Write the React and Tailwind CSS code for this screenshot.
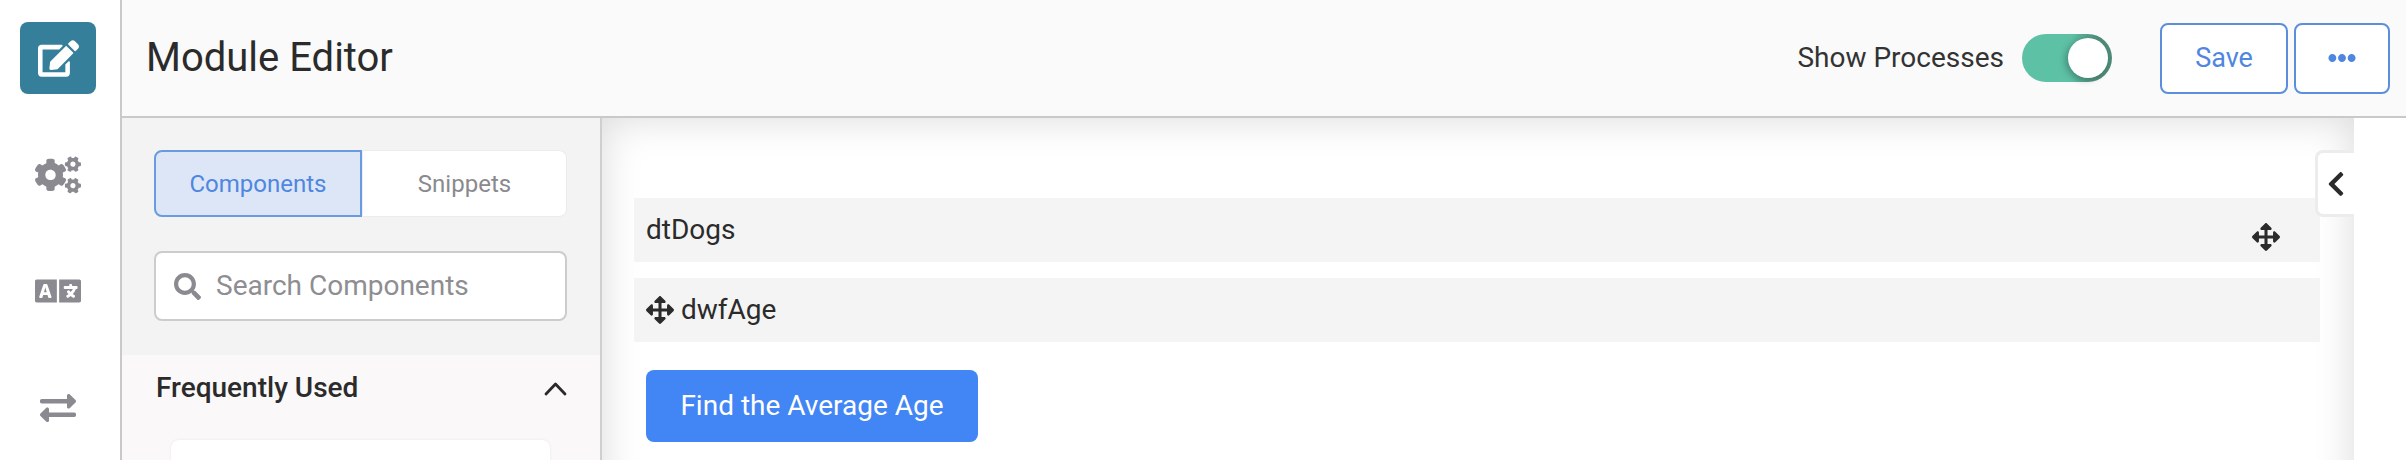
import React from 'react';
import { FaEdit, FaCogs, FaLanguage, FaExchangeAlt, FaSearch, FaEllipsisH, FaChevronLeft, FaArrowsAlt } from 'react-icons/fa';

const railItems = [
  { icon: FaEdit, size: 41, active: true },
  { icon: FaCogs, size: 46 },
  { icon: FaLanguage, size: 46 },
  { icon: FaExchangeAlt, size: 36 },
];

const App = () => {
  return (
    <div className="flex h-[460px] w-full overflow-hidden bg-white font-['Roboto',sans-serif] text-[#2b2b2b]">
      {/* left rail */}
      <div className="flex w-[122px] shrink-0 flex-col border-r-2 border-[#c9c9c9] bg-white pr-[4px]">
        {railItems.map(({ icon: Icon, size, active }, i) => (
          <div key={i} className="flex h-[116.5px] shrink-0 items-center justify-center">
            {active ? (
              <div className="flex h-[72px] w-[76px] items-center justify-center rounded-lg bg-[#367f9b] text-white">
                <Icon size={size} />
              </div>
            ) : (
              <Icon size={size} className="text-[#8a8a90]" />
            )}
          </div>
        ))}
      </div>

      <div className="flex min-w-0 flex-1 flex-col">
        {/* header */}
        <div className="relative z-10 flex h-[118px] shrink-0 items-center justify-between border-b-2 border-[#c9c9c9] bg-[#fafafa] pl-[24px] pr-[16px]">
          <h1 className="text-[40px] font-normal leading-none text-[#2b2b2b]">Module Editor</h1>
          <div className="flex items-center">
            <span className="text-[28px] text-[#333]">Show Processes</span>
            <div className="ml-[18px] flex h-[48px] w-[90px] items-center justify-end rounded-full bg-linear-to-r from-[#5dc1a6] from-[55%] to-[#4e8b78] to-[85%] pr-[4px]">
              <div className="h-[40px] w-[40px] rounded-full bg-white shadow-[-3px_2px_6px_rgba(0,0,0,0.25)]" />
            </div>
            <button className="ml-[48px] h-[71px] w-[128px] rounded-lg border-2 border-[#5b8fdc] bg-white text-[27px] text-[#4f86e0]">Save</button>
            <button className="ml-[6px] flex h-[71px] w-[96px] items-center justify-center rounded-lg border-2 border-[#5b8fdc] bg-white text-[#4f86e0]">
              <FaEllipsisH size={28} />
            </button>
          </div>
        </div>

        <div className="flex min-h-0 flex-1">
          {/* components sidebar */}
          <div className="flex w-[478px] shrink-0 flex-col bg-[#f3f3f3]">
            <div className="h-[237px] shrink-0 pl-[32px] pr-[33px] pt-[32px]">
              <div className="flex h-[67px] text-[24px]">
                <button className="w-[208px] rounded-l-lg border-2 border-[#6a9ae0] bg-[#dce6f7] text-[#4f86e0]">Components</button>
                <button className="flex-1 rounded-r-lg border border-[#ececec] bg-white text-[#8a8a8e]">Snippets</button>
              </div>
              <div className="mt-[34px] flex h-[70px] items-center rounded-lg border-2 border-[#cccccc] bg-white pl-[18px]">
                <FaSearch size={27} className="text-[#8a8a90]" />
                <span className="ml-[15px] text-[28px] text-[#8e8e92]">Search Components</span>
              </div>
            </div>
            <div className="flex-1 bg-[#faf8f8] pl-[34px] pr-[33px]">
              <div className="flex h-[66px] items-center justify-between">
                <span className="text-[28px] font-medium text-[#2b2b2b]">Frequently Used</span>
                <svg width="23" height="15" viewBox="0 0 23 15" fill="none" stroke="#2b2b2b" strokeWidth="2.8" strokeLinecap="round" strokeLinejoin="round">
                  <polyline points="2,13 11.5,3 21,13" />
                </svg>
              </div>
              <div className="ml-[15px] mt-[19px] h-[40px] w-[379px] rounded-t-lg bg-white shadow-[0_0_3px_rgba(0,0,0,0.08)]" />
            </div>
          </div>

          {/* canvas */}
          <div className="relative h-[500px] w-[1754px] shrink-0 border-l-2 border-[#cfcfcf] bg-white pl-[32px] pr-[34px] pt-[80px] shadow-[inset_0_0_40px_rgba(0,0,0,0.15)]">
            <div className="flex h-[64px] items-center justify-between bg-[#f4f4f4] pl-[12px] pr-[40px] text-[28px]">
              <span>dtDogs</span>
              <FaArrowsAlt size={28} className="mt-[14px] text-[#2b2b2b]" />
            </div>
            <div className="mt-[16px] flex h-[64px] items-center bg-[#f4f4f4] pl-[12px] text-[28px]">
              <FaArrowsAlt size={28} className="text-[#2b2b2b]" />
              <span className="ml-[7px]">dwfAge</span>
            </div>
            <button className="ml-[12px] mt-[28px] h-[72px] w-[332px] rounded-lg bg-[#4285f4] text-[28px] text-white">Find the Average Age</button>
            {/* collapse tab */}
            <div className="absolute right-0 top-[32px] flex h-[67px] w-[39px] items-center justify-center rounded-l-lg border-y-3 border-l-3 border-[#ececec] bg-white">
              <FaChevronLeft size={28} className="text-[#2b2b2b]" />
            </div>
          </div>

          <div className="flex-1 bg-white" />
        </div>
      </div>
    </div>
  );
};

export default App;
